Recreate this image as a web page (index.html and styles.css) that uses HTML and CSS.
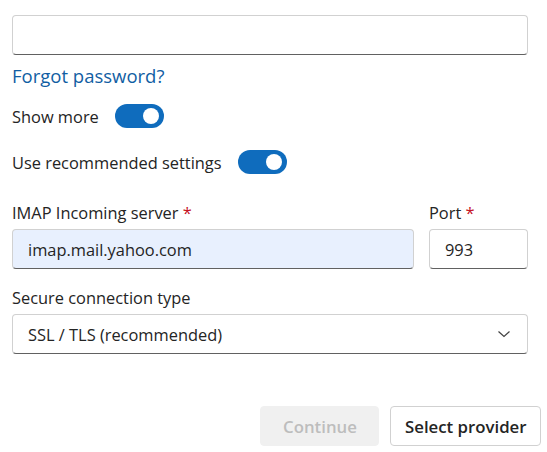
FILE: index.html
```html
<!DOCTYPE html>
<html lang="en">
<head>
    <meta charset="UTF-8">
    <title>Add account</title>
    <link rel="stylesheet" href="styles.css">
</head>
<body>
    <div class="panel">
        <input class="field" type="password" aria-label="Password">

        <a class="link" href="#">Forgot password?</a>

        <div class="switch-row row-more">
            <span>Show more</span>
            <span class="toggle on"><span class="knob"></span></span>
        </div>
        <div class="switch-row row-recommended">
            <span>Use recommended settings</span>
            <span class="toggle on"><span class="knob"></span></span>
        </div>

        <div class="server-row">
            <div class="group grow">
                <label class="label">IMAP Incoming server <span class="req">*</span></label>
                <input class="field autofilled" type="text" value="imap.mail.yahoo.com">
            </div>
            <div class="group port">
                <label class="label">Port <span class="req">*</span></label>
                <input class="field" type="text" value="993">
            </div>
        </div>

        <div class="group secure">
            <label class="label">Secure connection type</label>
            <div class="select">
                <span>SSL / TLS (recommended)</span>
                <svg class="chevron" width="16" height="16" viewBox="0 0 16 16">
                    <path d="M2.5 5.5 L8 10.5 L13.5 5.5" fill="none" stroke="#424242" stroke-width="1.2"/>
                </svg>
            </div>
        </div>

        <div class="actions">
            <button class="btn" disabled>Continue</button>
            <button class="btn">Select provider</button>
        </div>
    </div>
</body>
</html>
```

FILE: styles.css
```css
body {
    margin: 0;
    background: #fff;
    font-family: "Open Sans", "Noto Sans", Arial, sans-serif;
    font-size: 16.4px;
    color: #242424;
}
.panel {
    width: 516px;
    padding: 15px 0 0 12px;
}
.field {
    display: block;
    width: 100%;
    height: 40px;
    box-sizing: border-box;
    margin: 0;
    padding: 0 15px;
    border: 1px solid #d1d1d1;
    border-bottom-color: #616161;
    border-radius: 4px;
    background: #fff;
    font-family: inherit;
    font-size: 16.4px;
    color: #242424;
    outline: none;
}
.field.autofilled {
    background: #e8f0fe;
}
.link {
    display: inline-block;
    margin-top: 9px;
    line-height: 24px;
    font-size: 18.5px;
    color: #115ea3;
    text-decoration: none;
}
.switch-row {
    display: flex;
    align-items: center;
    gap: 16px;
    height: 24px;
}
.row-more {
    margin-top: 16px;
}
.row-recommended {
    margin-top: 22px;
}
.toggle {
    position: relative;
    width: 49px;
    height: 24px;
    border-radius: 12px;
    background: #0f6cbd;
}
.knob {
    position: absolute;
    top: 4px;
    right: 5px;
    width: 16px;
    height: 16px;
    border-radius: 50%;
    background: #fff;
}
.server-row {
    display: flex;
    gap: 15px;
    margin-top: 27px;
}
.group {
    display: flex;
    flex-direction: column;
    gap: 4px;
}
.grow {
    flex: 1;
}
.port {
    width: 99px;
}
.label {
    line-height: 24px;
}
.req {
    color: #c50f1f;
}
.secure {
    margin-top: 17px;
}
.select {
    display: flex;
    align-items: center;
    justify-content: space-between;
    height: 40px;
    box-sizing: border-box;
    padding: 0 15px;
    border: 1px solid #d1d1d1;
    border-bottom-color: #616161;
    border-radius: 4px;
}
.actions {
    display: flex;
    justify-content: flex-end;
    gap: 11px;
    margin: 52px -13px 0 0;
}
.btn {
    height: 40px;
    padding: 0 13.5px;
    border: 1px solid #d1d1d1;
    border-radius: 4px;
    background: #fff;
    font-family: inherit;
    font-size: 16.8px;
    font-weight: 600;
    color: #242424;
}
.btn:disabled {
    width: 119px;
    border-color: #f0f0f0;
    background: #f0f0f0;
    color: #bdbdbd;
}
```
